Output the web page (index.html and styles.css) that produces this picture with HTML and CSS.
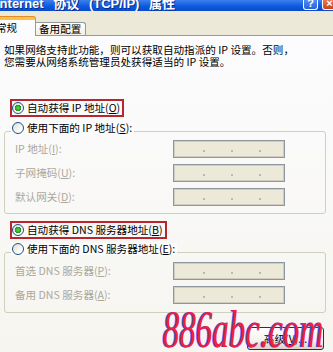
FILE: index.html
```html
<!DOCTYPE html>
<html lang="zh-CN">
<head>
<meta charset="utf-8">
<title>Internet 协议 (TCP/IP) 属性</title>
<link rel="stylesheet" href="styles.css">
</head>
<body>
<div class="window">
  <div class="titlebar">
    <span class="title">Internet 协议 (TCP/IP) 属性</span>
    <span class="tbtn help">?</span>
    <span class="tbtn close">×</span>
  </div>
  <div class="tabstrip">
    <div class="tab active">常规</div>
    <div class="tab">备用配置</div>
  </div>
  <div class="panel">
    <p class="intro">如果网络支持此功能，则可以获取自动指派的 IP 设置。否则，<br>您需要从网络系统管理员处获得适当的 IP 设置。</p>

    <div class="choice first">
      <span class="hl"><span class="radio checked"></span><span class="rtext">自动获得 IP 地址(<u>O</u>)</span></span>
    </div>

    <div class="group g1">
      <div class="legend"><span class="radio"></span><span class="rtext">使用下面的 IP 地址(<u>S</u>):</span></div>
      <div class="rows">
        <div class="row"><span class="label">IP 地址(<u>I</u>):</span><span class="ipbox"><i></i><i></i><i></i></span></div>
        <div class="row"><span class="label">子网掩码(<u>U</u>):</span><span class="ipbox"><i></i><i></i><i></i></span></div>
        <div class="row"><span class="label">默认网关(<u>D</u>):</span><span class="ipbox"><i></i><i></i><i></i></span></div>
      </div>
    </div>

    <div class="choice second">
      <span class="hl"><span class="radio checked"></span><span class="rtext">自动获得 DNS 服务器地址(<u>B</u>)</span></span>
    </div>

    <div class="group g2">
      <div class="legend"><span class="radio"></span><span class="rtext">使用下面的 DNS 服务器地址(<u>E</u>):</span></div>
      <div class="rows">
        <div class="row"><span class="label">首选 DNS 服务器(<u>P</u>):</span><span class="ipbox"><i></i><i></i><i></i></span></div>
        <div class="row"><span class="label">备用 DNS 服务器(<u>A</u>):</span><span class="ipbox"><i></i><i></i><i></i></span></div>
      </div>
    </div>

    <div class="actions">
      <button class="btn" type="button">高级(<u>V</u>)...</button>
    </div>
  </div>
  <span class="watermark">886abc.com</span>
</div>
</body>
</html>
```

FILE: styles.css
```css
html, body {
  margin: 0;
  padding: 0;
}

body {
  width: 333px;
  height: 352px;
  overflow: hidden;
  background: #ece9d8;
  font-family: "Noto Sans CJK SC", "Noto Sans", sans-serif;
  font-size: 10.6px;
  line-height: 12px;
  color: #000;
}

.window {
  position: relative;
  height: 352px;
  overflow: hidden;
}

/* ---------- title bar ---------- */
.titlebar {
  height: 11px;
  display: flex;
  align-items: flex-start;
  overflow: hidden;
  background: linear-gradient(#3d80ee, #0b58dc 60%, #0a4cc8);
}

.title {
  flex: 1;
  margin-left: -4px;
  margin-top: -3px;
  font: bold 13px/13px "Liberation Sans", "Noto Sans CJK SC", sans-serif;
  color: #fff;
  white-space: nowrap;
  word-spacing: 6px;
  text-shadow: 1px 1px 0 #0a2a8a;
}

.tbtn {
  width: 15px;
  height: 10px;
  box-sizing: border-box;
  border: 1px solid #fff;
  border-top: 0;
  border-radius: 0 0 3px 3px;
  color: #fff;
  font: bold 11px/6px "Liberation Sans", sans-serif;
  text-align: center;
}

.help {
  background: linear-gradient(#4f8cf2, #2a62da);
  margin-right: 4px;
}

.close {
  background: linear-gradient(#ea7652, #c9421c);
  margin-right: -4px;
}

/* ---------- tabs ---------- */
.tabstrip {
  height: 24px;
  display: flex;
  align-items: flex-end;
}

.tab {
  box-sizing: border-box;
  border: 1px solid #919b9c;
  border-bottom: 0;
  border-left: 0;
  white-space: nowrap;
  height: 13px;
  padding: 0 4px 0 3px;
  line-height: 12px;
  background: linear-gradient(#ffffff, #f0eee5);
  border-radius: 0 3px 0 0;
}

.tab.active {
  position: relative;
  z-index: 1;
  margin-left: -10px;
  width: 46px;
  height: 19px;
  margin-bottom: -1px;
  padding: 0 0 0 6px;
  border-top: 3px solid #fbc245;
  box-shadow: 0 -1px 0 #e68b2c;
  background: #fcfcfe;
  border-radius: 0 3px 0 0;
  line-height: 15px;
}

/* ---------- panel ---------- */
.panel {
  height: 316px;
  border-top: 1px solid #919b9c;
  background: linear-gradient(#fcfcfe, #f6f5f0);
}

.intro {
  margin: 8px 0 0 4px;
  white-space: nowrap;
}

.choice {
  display: flex;
  margin-left: 10px;
}

.choice.first {
  margin-top: 31px;
}

.choice.second {
  margin-top: 7px;
}

.hl {
  display: inline-flex;
  align-items: center;
  height: 14px;
  border: 2px solid #b8252d;
  padding-right: 2px;
  white-space: nowrap;
}

.radio {
  flex: none;
  width: 12px;
  height: 12px;
  box-sizing: border-box;
  border-radius: 50%;
  border: 1px solid #1c5180;
  background: linear-gradient(135deg, #dcd9cd, #ffffff 75%);
}

.radio.checked {
  background:
    radial-gradient(circle, #5fd858 0, #2ea62a 2.4px, #1f8f1f 3px, transparent 3.4px),
    linear-gradient(135deg, #dcd9cd, #ffffff 75%);
}

.rtext {
  margin-left: 3px;
  white-space: nowrap;
}

/* ---------- group boxes ---------- */
.group {
  margin: 14px 7px 0 4px;
  border: 1px solid #d0d0bf;
  border-radius: 3px;
  padding: 0 0 7px 10px;
}

.g2 {
  margin-top: 13px;
  padding-bottom: 8px;
}

.legend {
  display: flex;
  align-items: center;
  width: max-content;
  height: 12px;
  margin: -10px 0 0 -4px;
  padding: 0 2px 0 1px;
  background: #fcfcfe;
}

.rows {
  display: flex;
  flex-direction: column;
  gap: 6px;
  margin-top: 6px;
}

.g2 .rows {
  margin-top: 7px;
}

.row {
  display: flex;
  align-items: center;
  height: 18px;
}

.label {
  width: 158px;
  color: #aca899;
  white-space: nowrap;
}

.ipbox {
  width: 112px;
  height: 18px;
  box-sizing: border-box;
  border: 1px solid #8e979e;
  box-shadow: inset 0 0 0 1px #cfcdc2;
  background: #ece9d8;
  display: flex;
  align-items: center;
  padding-left: 29px;
  gap: 26px;
}

.ipbox i {
  width: 2px;
  height: 2px;
  margin-top: 3px;
  background: #bdbaac;
}

/* ---------- button ---------- */
.actions {
  display: flex;
  justify-content: flex-end;
  margin-top: 14px;
  padding-right: 9px;
}

.btn {
  width: 77px;
  height: 23px;
  padding: 0;
  border: 1px solid #003c74;
  border-radius: 3px;
  background: linear-gradient(#ffffff, #f3f2ec 60%, #d8d2c6);
  font: inherit;
  color: #000;
}

/* ---------- watermark overlay ---------- */
.watermark {
  position: absolute;
  left: 163px;
  top: 304px;
  z-index: 2;
  font: italic 52px/52px "Liberation Serif", serif;
  color: #f0203e;
  text-shadow: -2px 0 0 #4a55f0;
  transform: scaleX(0.635);
  transform-origin: 0 0;
  white-space: nowrap;
}
```
